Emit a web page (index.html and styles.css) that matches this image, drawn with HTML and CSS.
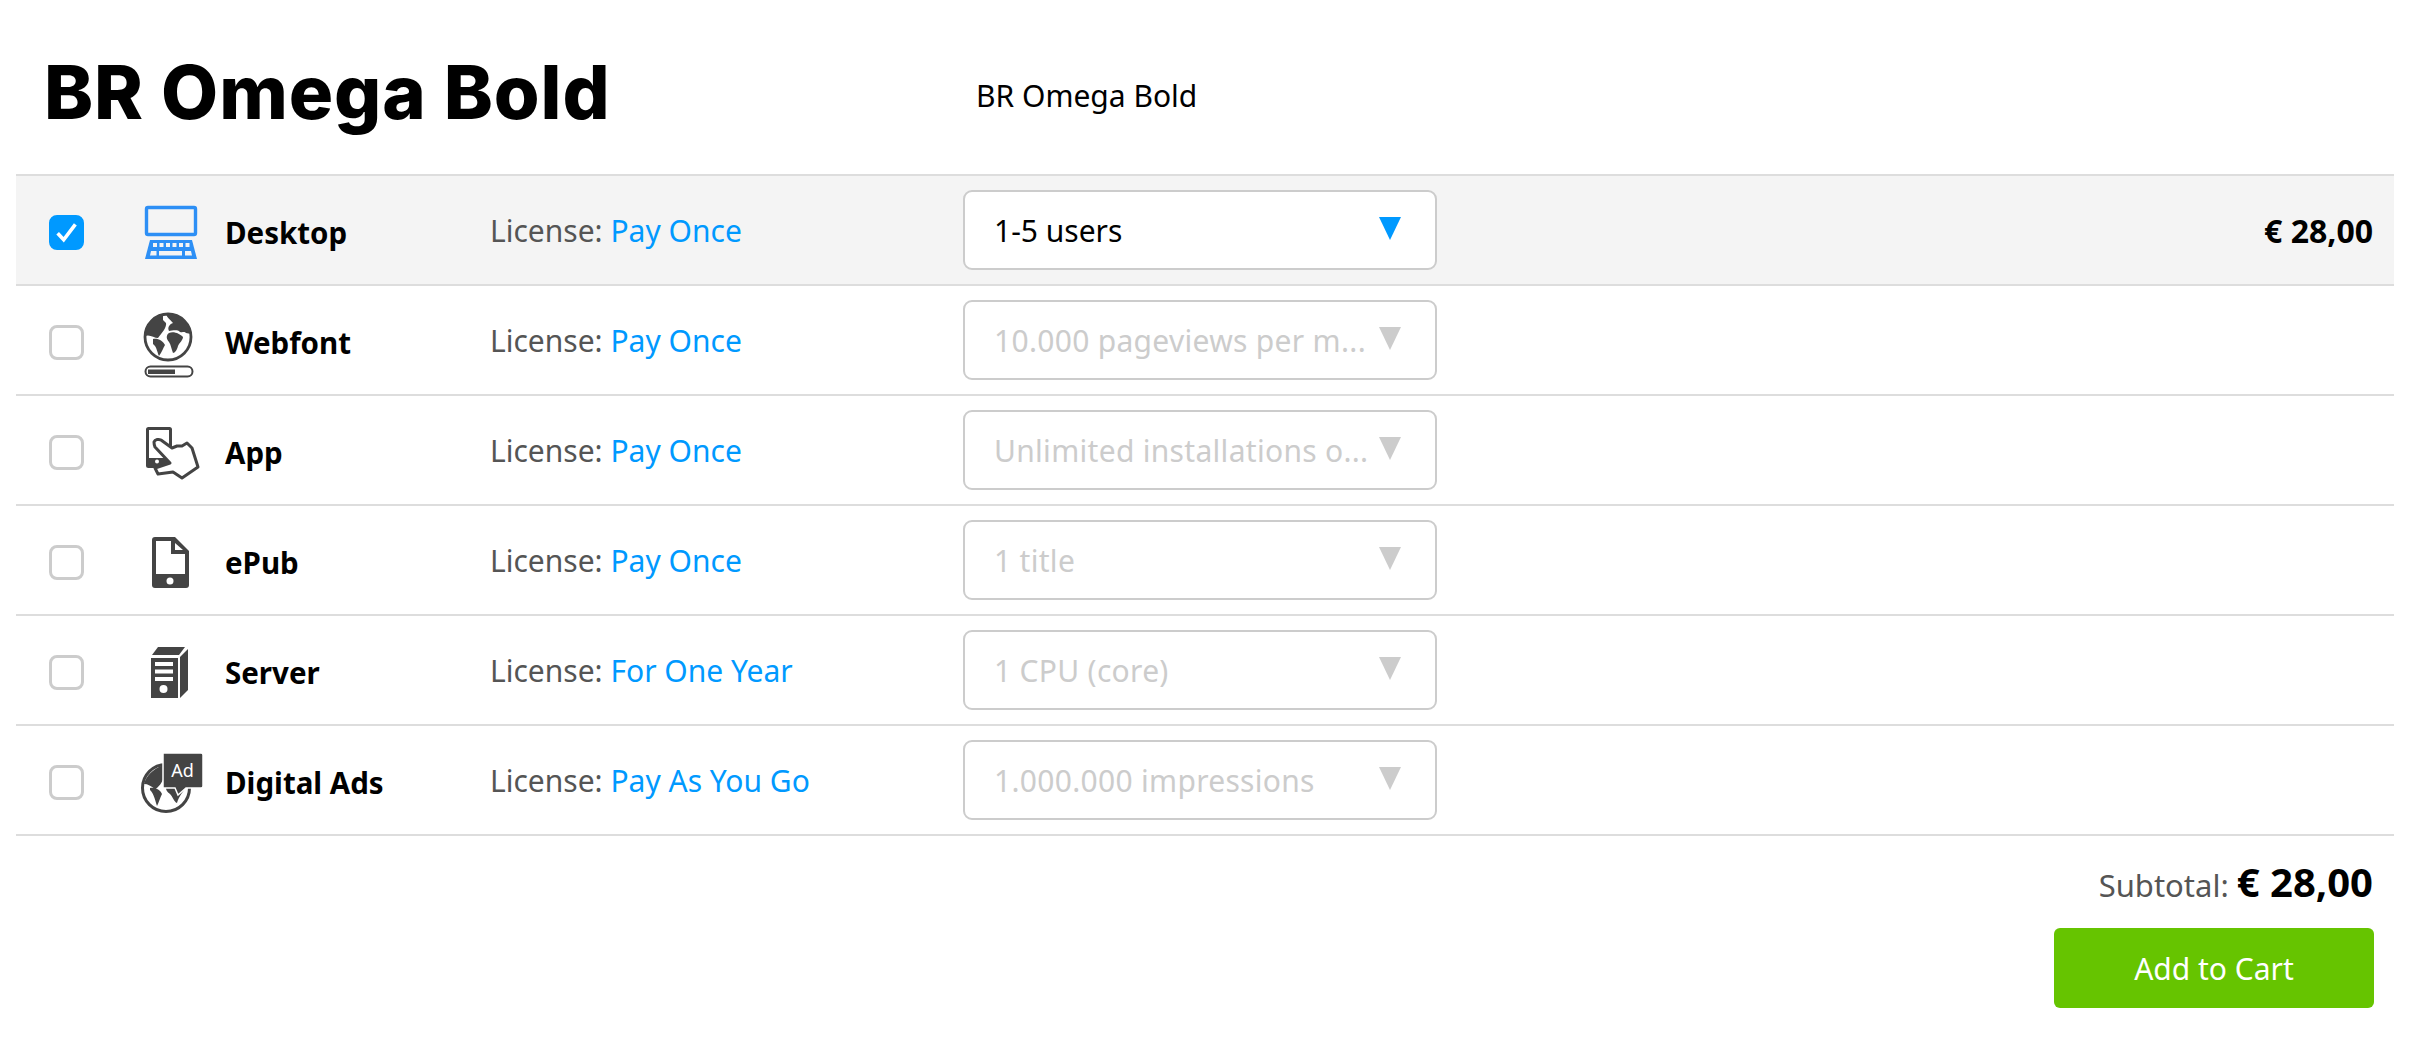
FILE: index.html
```html
<!DOCTYPE html>
<html lang="en">
<head>
<meta charset="utf-8">
<title>BR Omega Bold</title>
<link rel="stylesheet" href="styles.css">
</head>
<body>
<main class="panel">
  <header class="head">
    <h1 class="title">BR Omega Bold</h1>
    <p class="subtitle">BR Omega Bold</p>
  </header>

  <div class="row row-active">
    <span class="check check-on"><svg viewBox="0 0 36 36" class="tick"><path d="M7 19l7.500 8L29 8" /></svg></span>
    <svg class="icon" viewBox="0 0 80 80">
      <rect x="16.500" y="17.500" width="49" height="27" rx="1.500" fill="none" stroke="#2d8ff5" stroke-width="3.400"/>
      <path fill="#2d8ff5" d="M20 50H62L67 69H15Z"/>
      <path fill="#f4f4f4" d="M23 53h4v4h-4zM29.500 53h4v4h-4zM36 53h4v4h-4zM42.500 53h4v4h-4zM49 53h4v4h-4zM55.500 53h4v4h-4zM21 61h5.500v4.500H20zM29 61h23v4.500H29zM55 61h6l1 4.500h-7z"/>
    </svg>
    <span class="name">Desktop</span>
    <span class="license">License: <span class="link">Pay Once</span></span>
    <div class="select select-on"><span class="value">1-5 users</span><i class="arrow"></i></div>
    <span class="price">€ 28,00</span>
  </div>

  <div class="row">
    <span class="check"></span>
    <svg class="icon" viewBox="0 0 80 80">
      <circle cx="38" cy="37" r="23" fill="#fff" stroke="#444" stroke-width="2.800"/>
      <path fill="#444" d="M15 36C15 25 22 16 33 14L33 20L36 23C37 27 32 33 28 38C24 38 20 34 15 36ZM36 14C48 14 58 22 61 34L56 33C54 31 53 33 50 32C47 29 42 31 39 31C37 27 40 24 43 23C40 19 37 18 36 14ZM39 33C44 31 50 34 53 37C53 40 50 42 48 46C47 50 45 53 43 53C41 48 41 45 39 42C36 39 36 35 39 33ZM23 39C28 38 33 41 35 45C33 48 32 52 29 56C27 52 27 47 23 44Z"/>
      <rect x="15.500" y="66.500" width="47" height="10" rx="5" fill="#fff" stroke="#444" stroke-width="2"/>
      <rect x="18" y="69.500" width="27" height="4.500" fill="#444"/>
    </svg>
    <span class="name">Webfont</span>
    <span class="license">License: <span class="link">Pay Once</span></span>
    <div class="select select-off"><span class="value">10.000 pageviews per m...</span><i class="arrow"></i></div>
    <span class="price"></span>
  </div>

  <div class="row">
    <span class="check"></span>
    <svg class="icon" viewBox="0 0 80 80">
      <rect x="17.500" y="18.500" width="23" height="38" rx="1" fill="#fff" stroke="#444" stroke-width="3"/>
      <rect x="17" y="48" width="24" height="9" fill="#444"/>
      <circle cx="27" cy="51.500" r="2" fill="#fff"/>
      <path fill="#fff" stroke="#444" stroke-width="3" stroke-linejoin="round" d="M24 32C25 29 29 29 31 30L42 38L47 36L52 36L57 33L62 38L68 57L52 68L43 62L28 64L25 58L40 53L25 37C24 35 24 34 24 32Z"/>
    </svg>
    <span class="name">App</span>
    <span class="license">License: <span class="link">Pay Once</span></span>
    <div class="select select-off"><span class="value">Unlimited installations o...</span><i class="arrow"></i></div>
    <span class="price"></span>
  </div>

  <div class="row">
    <span class="check"></span>
    <svg class="icon" viewBox="0 0 80 80">
      <path fill="#444" d="M25 17H45L59 31V65a3 3 0 0 1-3 3H25a3 3 0 0 1-3-3V20a3 3 0 0 1 3-3Z"/>
      <path fill="#fff" d="M26 21H41V34H55V54H26ZM45 23L53 30H45Z"/>
      <circle cx="40" cy="61" r="3.500" fill="#fff"/>
    </svg>
    <span class="name">ePub</span>
    <span class="license">License: <span class="link">Pay Once</span></span>
    <div class="select select-off"><span class="value">1 title</span><i class="arrow"></i></div>
    <span class="price"></span>
  </div>

  <div class="row">
    <span class="check"></span>
    <svg class="icon" viewBox="0 0 80 80">
      <path fill="#444" d="M22 25L28 17H55L49 25ZM50 27L58 19V60L50 68ZM21 28H48V68H21Z"/>
      <path fill="#fff" d="M25 32H43V36H25ZM25 39.500H43V43.500H25ZM25 47H43V51H25Z"/>
      <circle cx="33.500" cy="59" r="4" fill="#fff"/>
    </svg>
    <span class="name">Server</span>
    <span class="license">License: <span class="link">For One Year</span></span>
    <div class="select select-off"><span class="value">1 CPU (core)</span><i class="arrow"></i></div>
    <span class="price"></span>
  </div>

  <div class="row">
    <span class="check"></span>
    <svg class="icon" viewBox="0 0 80 80">
      <circle cx="36" cy="48" r="23.500" fill="#fff" stroke="#444" stroke-width="3"/>
      <path fill="#444" d="M14 44C16 36 23 29 33 25L34 36C33 42 28 48 25 49C21 46 18 44 14 44ZM20 48C26 47 31 51 32 54C30 58 29 62 27 66C25 60 24 54 20 50ZM36 48L56 47C53 52 49 56 47 63C44 62 43 57 40 54C37 52 36 50 36 48Z"/>
      <path fill="#444" stroke="#fff" stroke-width="1.500" d="M33 13H71a2 2 0 0 1 2 2V46a2 2 0 0 1-2 2H56L48 55L45 48H33Z"/>
      <text class="ad" x="52.500" y="37" text-anchor="middle">Ad</text>
    </svg>
    <span class="name">Digital Ads</span>
    <span class="license">License: <span class="link">Pay As You Go</span></span>
    <div class="select select-off"><span class="value">1.000.000 impressions</span><i class="arrow"></i></div>
    <span class="price"></span>
  </div>

  <footer class="foot">
    <p class="subtotal">Subtotal: <strong class="total">€ 28,00</strong></p>
    <button class="cart" type="button">Add to Cart</button>
  </footer>
</main>
</body>
</html>
```
FILE: styles.css
```css
* { box-sizing: border-box; }
html, body { margin: 0; background: #fff; }
body { font-family: "Noto Sans", "Open Sans", sans-serif; color: #000; }
.panel { width: 2414px; height: 1060px; padding: 0 20px 0 16px; }
.head {
  display: grid;
  grid-template-columns: 932px 1fr;
  align-items: center;
  height: 176px;
  padding: 10px 0 0 28px;
  border-bottom: 2px solid #ddd;
}
.title {
  margin: 0;
  font: 800 74px/1 Inter, "Liberation Sans", sans-serif;
  letter-spacing: 0.900px;
}
.subtitle { margin: 6px 0 0; font-size: 30px; }
.row {
  display: grid;
  grid-template-columns: 81px 95px 265px 473px 474px 1fr;
  align-items: center;
  height: 110px;
  padding: 0 21px 0 33px;
  border-bottom: 2px solid #ddd;
}
.row-active { background: #f4f4f4; }
.check {
  display: block;
  width: 35px;
  height: 35px;
  margin-top: 5px;
  border: 3px solid #ccc;
  border-radius: 8px;
  background: #fff;
}
.check-on { background: #09f; border-color: #09f; }
.tick { display: block; width: 29px; height: 29px; fill: none; stroke: #fff; stroke-width: 4.500; }
.icon { display: block; width: 80px; height: 80px; }
.ad { font: 400 18px "Noto Sans", sans-serif; fill: #fff; }
.name { margin-top: 4px; font-size: 29.500px; font-weight: 700; }
.license { font-size: 30px; color: #555; }
.link { color: #09f; }
.select {
  display: flex;
  align-items: center;
  justify-content: space-between;
  height: 80px;
  padding: 0 34px 0 29px;
  border: 2px solid #ccc;
  border-radius: 9px;
  background: #fff;
  color: #000;
  font-size: 30px;
  white-space: nowrap;
}
.select-off { color: #ccc; letter-spacing: 0.300px; }
.arrow {
  display: block;
  flex: none;
  margin-top: -4px;
  border-style: solid;
  border-width: 23px 11.500px 0;
  border-color: #09f transparent transparent;
}
.select-off .arrow { border-top-color: #ccc; }
.price { font-size: 32px; font-weight: 700; text-align: right; }
.foot { display: flex; flex-direction: column; align-items: flex-end; padding-right: 20px; }
.subtotal { margin: 22px 1px 23px 0; height: 47px; font-size: 31px; color: #555; line-height: 47px; }
.total { font-size: 40px; font-weight: 700; color: #000; }
.cart {
  width: 320px;
  height: 80px;
  border: 0;
  border-radius: 6px;
  background: #66c400;
  color: #fff;
  font: 400 30px "Noto Sans", sans-serif;
}
```
